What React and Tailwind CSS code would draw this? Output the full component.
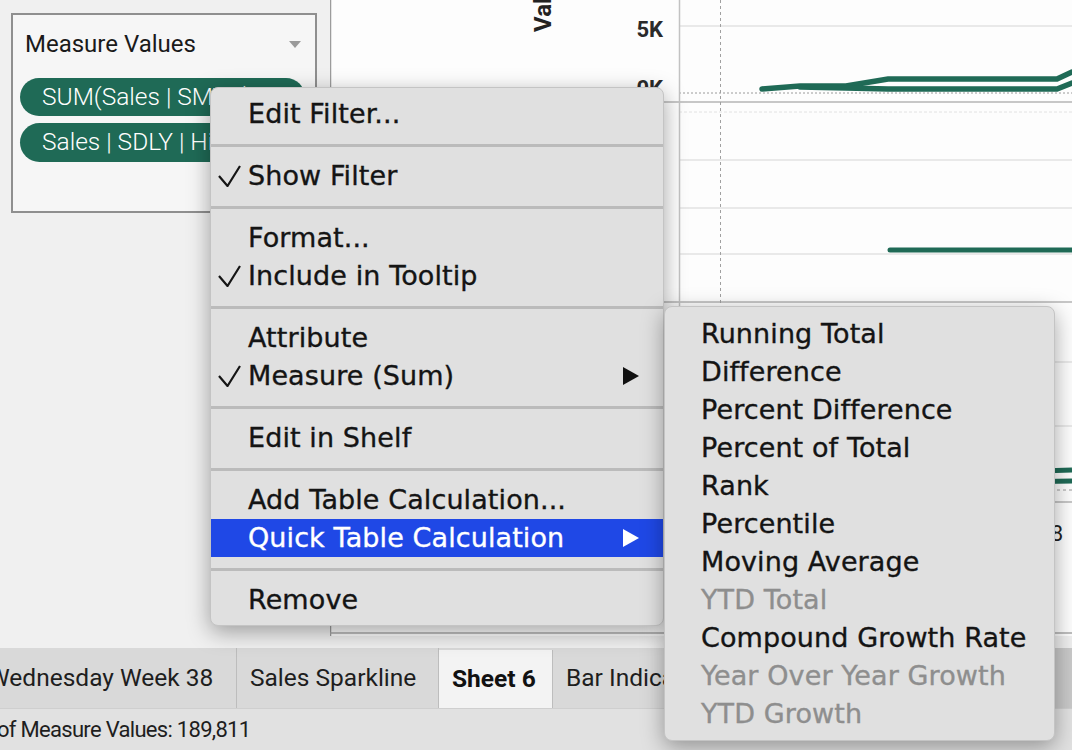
import React from "react";

const MENU_FONT = { fontFamily: '"DejaVu Sans", Verdana, sans-serif' };
const UI_FONT = { fontFamily: 'Roboto, "Liberation Sans", sans-serif' };

function Check({ light }) {
  return (
    <svg width="24" height="22" viewBox="0 0 24 22">
      <polyline
        points="1,11 9.5,21 22,1"
        fill="none"
        stroke={light ? "#fff" : "#151515"}
        strokeWidth="2.2"
        strokeLinejoin="miter"
      />
    </svg>
  );
}

function Arrow({ light }) {
  return (
    <svg width="16" height="18" viewBox="0 0 16 18">
      <polygon points="0,0 16,9 0,18" fill={light ? "#fff" : "#111"} />
    </svg>
  );
}

function Item({ label, checked, submenu, active }) {
  return (
    <div
      className={`h-[38px] flex items-center ${
        active ? "bg-[#1f48e6] text-white" : "text-[#141414]"
      }`}
    >
      <div className="w-[37px] pl-[7px] flex items-center">
        {checked && <Check light={active} />}
      </div>
      <span className="flex-1 whitespace-nowrap">{label}</span>
      {submenu && (
        <div className="mr-[24px] flex items-center">
          <Arrow light={active} />
        </div>
      )}
    </div>
  );
}

function Sep() {
  return (
    <div className="h-[24px] flex items-center">
      <div className="h-[3px] w-full bg-[#bbbbbb]" />
    </div>
  );
}

function Chart() {
  const grid = "#e9e9e9";
  const green = "#1f6a56";
  return (
    <svg width="742" height="648" className="block">
      <rect width="742" height="636" fill="#fdfdfd" />
      <rect y="636" width="742" height="12" fill="#efefef" />
      <line x1="0.5" y1="0" x2="0.5" y2="636" stroke="#9c9c9c" strokeWidth="1.5" />

      <text
        transform="translate(221 32) rotate(-90)"
        fontSize="24"
        fontWeight="700"
        fill="#222"
        fontFamily="Roboto, sans-serif"
      >
        Value
      </text>
      <text x="333" y="37" textAnchor="end" fontSize="22" fontWeight="700" fill="#2a2a2a" fontFamily="Roboto, sans-serif">
        5K
      </text>
      <text x="333" y="96" textAnchor="end" fontSize="22" fontWeight="700" fill="#2a2a2a" fontFamily="Roboto, sans-serif">
        0K
      </text>

      {/* pane 1 */}
      <line x1="349" y1="26" x2="742" y2="26" stroke={grid} strokeWidth="2" />
      <line x1="349" y1="93" x2="742" y2="93" stroke="#9a9a9a" strokeDasharray="2 2" />
      <polyline
        points="432,89 470,86 516,86 558,79 727,79 742,72"
        fill="none"
        stroke={green}
        strokeWidth="5.5"
        strokeLinecap="round"
      />
      <polyline
        points="470,87 516,88 558,89 727,89 742,83"
        fill="none"
        stroke={green}
        strokeWidth="5.5"
        strokeLinecap="round"
      />
      <line x1="0" y1="102" x2="742" y2="102" stroke="#b4b4b4" strokeWidth="1.5" />

      {/* pane 2 */}
      <line x1="349" y1="112" x2="742" y2="112" stroke="#e2e2e2" strokeDasharray="3 2" />
      <line x1="349" y1="160" x2="742" y2="160" stroke={grid} strokeWidth="2" />
      <line x1="349" y1="208" x2="742" y2="208" stroke={grid} strokeWidth="2" />
      <line x1="349" y1="254" x2="742" y2="254" stroke={grid} strokeWidth="2" />
      <line x1="560" y1="250" x2="742" y2="250" stroke={green} strokeWidth="5" strokeLinecap="round" />
      <line x1="0" y1="302" x2="742" y2="302" stroke="#b4b4b4" strokeWidth="1.5" />

      {/* pane 3 */}
      <line x1="349" y1="362" x2="742" y2="362" stroke={grid} strokeWidth="2" />
      <line x1="349" y1="426" x2="742" y2="426" stroke={grid} strokeWidth="2" />
      <line x1="680" y1="472" x2="742" y2="470" stroke={green} strokeWidth="5" />
      <line x1="680" y1="482" x2="742" y2="481" stroke={green} strokeWidth="5" />
      <line x1="349" y1="490" x2="742" y2="490" stroke="#9a9a9a" strokeDasharray="3 3" />
      <line x1="0" y1="502" x2="742" y2="502" stroke="#b4b4b4" strokeWidth="1.5" />
      <text x="733" y="541" textAnchor="end" fontSize="22" fill="#222" fontFamily="Roboto, sans-serif">
        Week 38
      </text>

      <line x1="349.5" y1="0" x2="349.5" y2="633" stroke="#c2c2c2" strokeWidth="1.5" />
      <line x1="390.5" y1="0" x2="390.5" y2="633" stroke="#a0a0a0" strokeDasharray="3 3" />
      <line x1="0" y1="633" x2="742" y2="633" stroke="#a8a8a8" strokeWidth="1.5" />
    </svg>
  );
}

export default function App() {
  return (
    <div className="relative w-[1072px] h-[750px] overflow-hidden bg-[#f0f0f0] flex flex-col" style={UI_FONT}>
      {/* MAIN AREA */}
      <div className="h-[648px] flex">
        <aside className="w-[330px] bg-[#f0f0f0] pt-[13px] pl-[11px]">
          <div className="w-[306px] h-[200px] border-2 border-[#8f8f8f] bg-[#f6f6f6]">
            <div className="pt-[15px] pl-[12px] pr-[14px] flex items-center justify-between">
              <span className="text-[24px] leading-[28px] text-[#1a1a1a]">Measure Values</span>
              <svg width="12" height="7" viewBox="0 0 12 7">
                <polygon points="0,0 12,0 6,7" fill="#9a9a9a" />
              </svg>
            </div>
            <div className="mt-[20px] pl-[7px] flex flex-col gap-[7px]">
              <div className="w-[285px] h-[38px] rounded-full bg-[#1f6a56] text-white text-[24.5px] font-light pl-[22px] flex items-center whitespace-nowrap">
                SUM(Sales | SMTD)
              </div>
              <div className="w-[285px] h-[39px] rounded-full bg-[#1f6a56] text-white text-[24.5px] font-light pl-[22px] flex items-center whitespace-nowrap">
                Sales | SDLY | Highlight
              </div>
            </div>
          </div>
        </aside>
        <div className="flex-1">
          <Chart />
        </div>
      </div>

      {/* TABS */}
      <div className="h-[60px] bg-[#d9d9d9] flex items-stretch text-[24.5px] text-[#1e1e1e] whitespace-nowrap">
        <div className="w-[249px] -ml-[12px] border-r border-[#bdbdbd] flex items-center">
          Wednesday Week 38
        </div>
        <div className="w-[202px] border-r border-[#bdbdbd] flex items-center pl-[13px]">Sales Sparkline</div>
        <div className="w-[114px] border-r border-[#bdbdbd] bg-[#f3f3f3] flex items-center pl-[13px] font-bold text-[#111] mt-[2px]">
          Sheet 6
        </div>
        <div className="w-[111px] overflow-hidden flex items-center pl-[13px]">Bar Indicators</div>
        <div className="flex-1 bg-[#c9c9c9]" />
      </div>

      {/* STATUS */}
      <div className="h-[42px] bg-[#e1e1e1] border-t border-[#cfcfcf] flex items-center text-[22px] tracking-[-0.7px] text-[#1e1e1e] whitespace-nowrap">
        <span className="-ml-[3px]">of Measure Values: 189,811</span>
      </div>

      {/* CONTEXT MENU */}
      <div
        className="absolute left-[210px] top-[87px] w-[454px] rounded-[8px] bg-[#e0e0e0] border border-[#c4c4c4] pt-[7px] pb-[6px] text-[27px] tracking-[0.1px] [-webkit-text-stroke:0.35px_currentColor] shadow-[0_6px_22px_rgba(0,0,0,0.35)]"
        style={MENU_FONT}
      >
        <Item label="Edit Filter..." />
        <Sep />
        <Item label="Show Filter" checked />
        <Sep />
        <Item label="Format..." />
        <Item label="Include in Tooltip" checked />
        <Sep />
        <Item label="Attribute" />
        <Item label="Measure (Sum)" checked submenu />
        <Sep />
        <Item label="Edit in Shelf" />
        <Sep />
        <Item label="Add Table Calculation..." />
        <Item label="Quick Table Calculation" submenu active />
        <Sep />
        <Item label="Remove" />
      </div>

      {/* SUBMENU */}
      <div
        className="absolute left-[664px] top-[306px] w-[391px] rounded-[8px] bg-[#e0e0e0] border border-[#c4c4c4] pt-[8px] pb-[7px] text-[27px] tracking-[0.1px] [-webkit-text-stroke:0.35px_currentColor] shadow-[0_6px_22px_rgba(0,0,0,0.35)]"
        style={MENU_FONT}
      >
        {[
          ["Running Total", false],
          ["Difference", false],
          ["Percent Difference", false],
          ["Percent of Total", false],
          ["Rank", false],
          ["Percentile", false],
          ["Moving Average", false],
          ["YTD Total", true],
          ["Compound Growth Rate", false],
          ["Year Over Year Growth", true],
          ["YTD Growth", true],
        ].map(([label, disabled]) => (
          <div
            key={label}
            className={`h-[38px] flex items-center pl-[36px] whitespace-nowrap ${
              disabled ? "text-[#8e8e8e]" : "text-[#141414]"
            }`}
          >
            {label}
          </div>
        ))}
      </div>
    </div>
  );
}
